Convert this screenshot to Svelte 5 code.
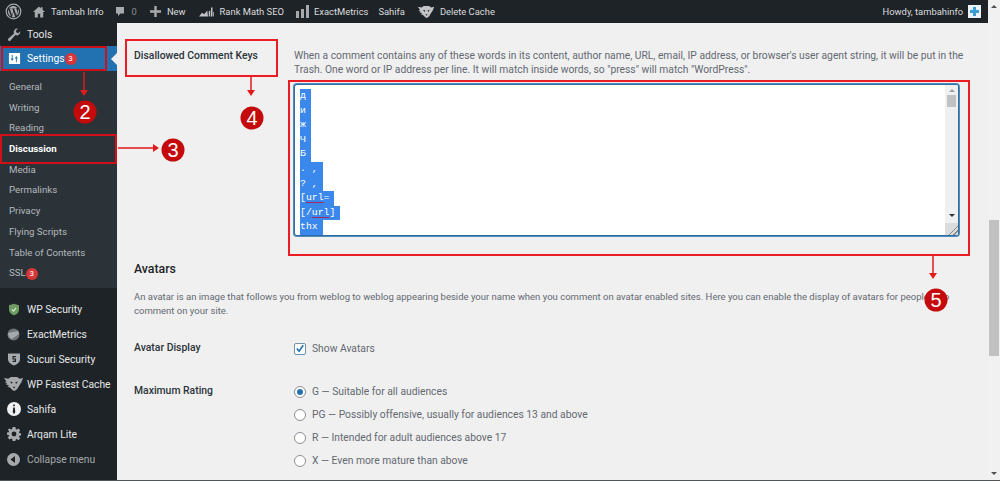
<script>
  const subs = ['General', 'Writing', 'Reading', 'Discussion', 'Media', 'Permalinks', 'Privacy', 'Flying Scripts', 'Table of Contents', 'SSL'];
  const plugins = [
    { name: 'WP Security', icon: 'shield' },
    { name: 'ExactMetrics', icon: 'metrics' },
    { name: 'Sucuri Security', icon: 'sucuri' },
    { name: 'WP Fastest Cache', icon: 'cheetah' },
    { name: 'Sahifa', icon: 'info' },
    { name: 'Arqam Lite', icon: 'gear' }
  ];
  const ratings = [
    'G — Suitable for all audiences',
    'PG — Possibly offensive, usually for audiences 13 and above',
    'R — Intended for adult audiences above 17',
    'X — Even more mature than above'
  ];
  const keys = ['д', 'и', 'ж', 'Ч', 'Б', '. ,', '? ,', '[url=', '[/url]', 'thx'];
</script>

{#snippet cheetah(w, h, fill)}
  <svg class="ico" width={w} height={h} viewBox="0 0 24 18" aria-hidden="true">
    <path fill={fill} d="M1 2l5 1 3-2h7l3 2 4-1-2 5-2 3-3 5-3 2-2-1-3-3-3-1 2-1-4-2 2-1-3-1 2-1z" />
    <path fill="#1d2327" d="M8 6l3 1-1 2zM17 6l-3 1 1 2zM11 12h3l-1 2z" />
  </svg>
{/snippet}

<div class="page">
  <div class="wrap">
    <header class="topbar">
      <div class="bar-left">
        <svg class="ico wp" width="17" height="17" viewBox="0 0 20 20" aria-hidden="true">
          <circle cx="10" cy="10" r="8.6" fill="none" stroke="#a7aaad" stroke-width="1.4" />
          <path fill="#a7aaad" d="M3.4 10c0 2.6 1.5 4.9 3.7 6L4 7.5A6.600 6.600 0 0 0 3.400 10zm11-.4c0-.8-.3-1.400-.5-1.800-.3-.5-.6-.9-.6-1.400 0-.5.4-1.100 1-1.100h.1A6.600 6.600 0 0 0 4.400 6.500h.4c.7 0 1.800-.1 1.800-.1.400 0 .4.500 0 .6 0 0-.4 0-.8.100l2.400 7.200 1.500-4.400-1-2.800-.7-.1c-.4 0-.3-.6 0-.6 0 0 1.100.1 1.800.1s1.800-.1 1.800-.1c.4 0 .4.500 0 .6 0 0-.4 0-.8.100l2.400 7.100.7-2.200c.3-.9.500-1.600.5-2.200zM10.100 10.700l-2 5.800a6.600 6.600 0 0 0 4-.1l-.1-.1zM15.800 7c0 .7-.1 1.400-.5 2.300l-2 5.800A6.600 6.600 0 0 0 15.800 7z" />
        </svg>
        <span class="bar-item home">
          <svg class="ico" width="12" height="12" viewBox="0 0 20 18" aria-hidden="true"><path fill="#a7aaad" d="M10 0L0 9h3v9h5v-6h4v6h5V9h3l-4-3.600V1h-3v2z" /></svg>
          Tambah Info
        </span>
        <span class="bar-item comments">
          <svg class="ico" width="10" height="11" viewBox="0 0 20 20" aria-hidden="true"><path fill="#a7aaad" d="M2 1h16v13h-7l-5 5v-5H2z" /></svg>
          <span class="muted">0</span>
        </span>
        <span class="bar-item new">
          <svg class="ico" width="11" height="11" viewBox="0 0 11 11" aria-hidden="true"><path fill="#a7aaad" d="M4.300 0h2.400v4.300H11v2.400H6.700V11H4.300V6.700H0V4.300h4.300z" /></svg>
          New
        </span>
        <span class="bar-item rank">
          <svg class="ico" width="15" height="10" viewBox="0 0 20 12" aria-hidden="true"><path fill="#c3c4c7" d="M0 12l4-5 3 2 4-5 1 8zM13 12V5l2-1v8zM16 12V0l2 0v12zM19 12V6h1v6z" /></svg>
          Rank Math SEO
        </span>
        <span class="bar-item metrics">
          <svg class="ico" width="13" height="13" viewBox="0 0 13 13" aria-hidden="true"><path fill="#a7aaad" d="M0 6h3v7H0zM5 4h3v9H5zM10 0h3v13h-3z" /></svg>
          ExactMetrics
        </span>
        <span class="bar-item sahifa">Sahifa</span>
        <span class="bar-item cache">
          {@render cheetah(18, 14, '#c3c4c7')}
          Delete Cache
        </span>
      </div>
      <div class="bar-right">
        <span>Howdy, tambahinfo</span>
        <span class="avatar"><span class="cross"></span></span>
      </div>
    </header>

    <div class="body">
      <nav class="side">
        <div class="menu tools">
          <svg class="ico" width="14" height="14" viewBox="0 0 20 20" aria-hidden="true"><path fill="#a7aaad" d="M19 5.500a5 5 0 0 1-7 4.600L5 18a2 2 0 0 1-3-3l8-7A5 5 0 0 1 15.500 1L12.500 4l1 2.500 2.500 1 3-3z" /></svg>
          Tools
        </div>
        <div class="menu current">
          <svg class="ico" width="13" height="13" viewBox="0 0 14 14" aria-hidden="true"><path fill="#fff" fill-rule="evenodd" d="M1 1h12v12H1zM4 3v4H2.800l1.700 2.600L6.200 7H5V3zM9.500 11V7h1.200L9 4.400 7.300 7h1.200v4z" /></svg>
          Settings <span class="count">3</span>
        </div>
        <ul class="sub">
          {#each subs as s}
            <li class:on={s === 'Discussion'}>{s}{#if s === 'SSL'} <span class="count">3</span>{/if}</li>
          {/each}
        </ul>
        <div class="plugins">
          {#each plugins as p}
            <div class="menu">
              <span class="slot">
                {#if p.icon === 'shield'}
                  <svg class="ico" width="10" height="13" viewBox="0 0 12 14" aria-hidden="true"><path fill="#6d9b62" d="M6 0l6 2v5c0 3.500-3 6-6 7-3-1-6-3.500-6-7V2z" /><path fill="none" stroke="#d8e8d4" stroke-width="1.300" d="M3.500 7l2 2 3-4" /></svg>
                {:else if p.icon === 'metrics'}
                  <svg class="ico" width="13" height="13" viewBox="0 0 13 13" aria-hidden="true"><circle cx="6.500" cy="6.500" r="6" fill="#6f7478" /><path fill="#a7aaad" d="M1 5l10-2 1 3-7 5-3-2z" /></svg>
                {:else if p.icon === 'sucuri'}
                  <svg class="ico" width="12" height="14" viewBox="0 0 13 14" aria-hidden="true"><path fill="#a7aaad" d="M0 1h13v6c0 3.500-3 6-6.500 7C3 13 0 10.500 0 7z" /><path fill="none" stroke="#1d2327" stroke-width="1.300" d="M8.500 4.500h-3v2.500h2.500v2.500h-3" /></svg>
                {:else if p.icon === 'cheetah'}
                  {@render cheetah(21, 16, '#a7aaad')}
                {:else if p.icon === 'info'}
                  <svg class="ico" width="14" height="14" viewBox="0 0 14 14" aria-hidden="true"><circle cx="7" cy="7" r="7" fill="#f0f0f1" /><path fill="#1d2327" d="M6.200 2.500h1.600v1.800H6.200zM6.200 5.500h1.600L8.300 10 7 12.300 5.700 10z" /></svg>
                {:else}
                  <svg class="ico" width="14" height="14" viewBox="0 0 20 20" aria-hidden="true"><path fill="#a7aaad" fill-rule="evenodd" d="M8 0h4l.5 3 1.500.7L16.500 2 19 5l-2 2 .5 1.500 2.500.5v3l-2.500.5-.5 1.500 2 2-2.500 3-2.500-1.700-1.500.7L12 20H8l-.5-3-1.500-.7L3.500 18 1 15l2-2-.5-1.500L0 11V8l2.500-.5L3 6 1 4l2.500-2L6 3.700 7.500 3zM10 6.500a3.500 3.500 0 1 0 0 7 3.500 3.500 0 0 0 0-7z" /></svg>
                {/if}
              </span>
              {p.name}
            </div>
          {/each}
          <div class="menu collapse">
            <span class="slot">
              <svg class="ico" width="13" height="13" viewBox="0 0 13 13" aria-hidden="true"><circle cx="6.500" cy="6.500" r="6.500" fill="#a7aaad" /><path fill="#1d2327" d="M8 3v7L3.500 6.500z" /></svg>
            </span>
            Collapse menu
          </div>
        </div>
      </nav>

      <main class="content">
        <section class="row keys-row">
          <h4 class="label">Disallowed Comment Keys</h4>
          <div class="field">
            <p class="desc">When a comment contains any of these words in its content, author name, URL, email, IP address, or browser's user agent string, it will be put in the Trash. One word or IP address per line. It will match inside words, so "press" will match "WordPress".</p>
            <div class="ta">
              <div class="ta-text">
                {#each keys as k}
                  <div class="line"><span class="sel">{#each k.split(/(url)/) as part}{#if part === 'url'}<span class="typo">{part}</span>{:else}{part}{/if}{/each}</span></div>
                {/each}
              </div>
              <div class="ta-scroll">
                <span class="up"></span>
                <span class="thumb"></span>
                <span class="grow"></span>
                <span class="down"></span>
                <span class="grip"></span>
              </div>
            </div>
          </div>
        </section>

        <h3 class="heading">Avatars</h3>
        <p class="intro">An avatar is an image that follows you from weblog to weblog appearing beside your name when you comment on avatar enabled sites. Here you can enable the display of avatars for people who comment on your site.</p>

        <section class="row display-row">
          <h4 class="label">Avatar Display</h4>
          <label class="choice">
            <span class="check">
              <svg width="11" height="11" viewBox="0 0 11 11" aria-hidden="true"><path fill="none" stroke="#2271b1" stroke-width="1.800" d="M2 5.500l2.500 3L9 2" /></svg>
            </span>
            Show Avatars
          </label>
        </section>

        <section class="row">
          <h4 class="label">Maximum Rating</h4>
          <div class="radios">
            {#each ratings as r, i}
              <div class="choice">
                <span class="radio" class:picked={i === 0}></span>
                {r}
              </div>
            {/each}
          </div>
        </section>
      </main>
    </div>
    <div class="bottom-edge"></div>
  </div>

  <aside class="scrollbar">
    <span class="sb-up"></span>
    <span class="sb-thumb"></span>
    <span class="sb-down"></span>
  </aside>

  <!-- red tutorial marks laid over the screenshot -->
  <div class="box dark" style="left:1px;top:46px;width:106px;height:25px"></div>
  <div class="box dark" style="left:0;top:134px;width:117px;height:30px"></div>
  <div class="box" style="left:125px;top:39px;width:153px;height:38px"></div>
  <div class="box" style="left:288px;top:80px;width:682px;height:176px"></div>

  <svg class="marks" width="1000" height="481" viewBox="0 0 1000 481" aria-hidden="true">
    <g fill="none" stroke="#e01b1b" stroke-width="1.500">
      <path d="M84 72v19" />
      <path d="M118 148h36" />
      <path d="M251 77v15" />
      <path d="M933 256v18" />
    </g>
    <g fill="#e01b1b">
      <path d="M80 90h8l-4 6z" />
      <path d="M153 144v8l6-4z" />
      <path d="M247 90h8l-4 6z" />
      <path d="M929 273h8l-4 6z" />
    </g>
    <g fill="#c40a0a">
      <circle cx="85" cy="112" r="11.500" />
      <circle cx="173" cy="150" r="11.500" />
      <circle cx="252" cy="118" r="11.500" />
      <circle cx="936" cy="300" r="11.500" />
    </g>
  </svg>
  <span class="num" style="left:74px;top:100px">2</span>
  <span class="num" style="left:162px;top:138px">3</span>
  <span class="num" style="left:241px;top:106px">4</span>
  <span class="num" style="left:925px;top:288px">5</span>
</div>

<style>
  :global(body) {
    margin: 0;
    background: #f0f0f1;
  }

  .page {
    position: relative;
    display: flex;
    width: 1000px;
    height: 481px;
    overflow: hidden;
    font-family: Roboto, "Noto Sans", sans-serif;
    font-size: 10.300px;
    color: #50575e;
    background: #f0f0f1;
  }

  .wrap {
    flex: 1;
    display: flex;
    flex-direction: column;
    min-width: 0;
  }

  .ico {
    display: block;
    flex: none;
  }

  /* admin bar */
  .topbar {
    height: 23px;
    flex: none;
    background: #1d2327;
    color: #dcdcde;
    font-size: 9.400px;
    display: flex;
    justify-content: space-between;
    align-items: center;
    padding: 0 7px 0 5px;
  }

  .bar-left,
  .bar-right,
  .bar-item {
    display: flex;
    align-items: center;
  }

  .bar-item {
    gap: 6px;
  }

  .home { margin-left: 11px; }
  .comments { margin-left: 11px; gap: 7px; }
  .new { margin-left: 13px; }
  .rank { margin-left: 13px; }
  .metrics { margin-left: 12px; gap: 5px; }
  .sahifa { margin-left: 10px; }
  .cache { margin-left: 12px; gap: 5px; }

  .muted {
    color: #8c8f94;
  }

  .bar-right {
    gap: 5px;
  }

  .avatar {
    width: 13px;
    height: 13px;
    background: #e8f2f8;
    position: relative;
  }

  .cross {
    position: absolute;
    left: 2px;
    top: 2px;
    width: 9px;
    height: 9px;
    background:
      linear-gradient(#3a9bd5, #3a9bd5) center / 3px 9px no-repeat,
      linear-gradient(#3a9bd5, #3a9bd5) center / 9px 3px no-repeat;
  }

  /* left menu */
  .body {
    flex: 1;
    display: flex;
    min-height: 0;
  }

  .side {
    width: 117px;
    flex: none;
    background: #1d2327;
    color: #e6e7e8;
    display: flex;
    flex-direction: column;
  }

  .menu {
    height: 25px;
    display: flex;
    align-items: center;
    gap: 6px;
    padding-left: 7px;
    font-size: 10.300px;
    white-space: nowrap;
  }

  .tools {
    height: 23px;
    gap: 6px;
  }

  .current {
    background: #2271b1;
    color: #fff;
    padding-left: 8px;
    position: relative;
  }

  .current::after {
    content: "";
    position: absolute;
    right: 0;
    top: 7px;
    border: 6px solid transparent;
    border-right-color: #f0f0f1;
    border-left-width: 0;
  }

  .count {
    display: inline-block;
    min-width: 12px;
    height: 12px;
    line-height: 12px;
    border-radius: 6px;
    background: #d63638;
    color: #fff;
    font-size: 8px;
    text-align: center;
    margin-left: -6px;
  }

  .sub {
    list-style: none;
    margin: 0;
    padding: 6px 0 4px;
    background: #2c3338;
    color: #b4b9be;
  }

  .sub li {
    height: 20.700px;
    line-height: 20.700px;
    padding-left: 9px;
    font-size: 9.700px;
  }

  .sub li .count {
    margin-left: 0;
  }

  .sub li.on {
    color: #fff;
    font-weight: 700;
  }

  .plugins {
    padding-top: 9px;
  }

  .slot {
    width: 15px;
    display: flex;
    justify-content: center;
    flex: none;
    margin-left: -1px;
  }

  .collapse {
    color: #a7aaad;
  }

  /* settings content */
  .content {
    flex: 1;
    min-width: 0;
    padding: 0 17px 0 17px;
  }

  .row {
    display: flex;
  }

  .label {
    width: 160px;
    flex: none;
    margin: 0;
    font-size: 10.400px;
    font-weight: 500;
    color: #2c3338;
  }

  .keys-row {
    padding-top: 26px;
  }

  .field {
    flex: 1;
    min-width: 0;
    margin-right: -2px;
  }

  .desc {
    margin: 0 0 7px;
    line-height: 14px;
    color: #646970;
  }

  .ta {
    width: 665px;
    height: 152px;
    box-sizing: border-box;
    border: 1px solid #2f6ea5;
    border-radius: 3px;
    background: #fff;
    display: flex;
    overflow: hidden;
    box-shadow: 0 0 0 1px #4f8ab8;
  }

  .ta-text {
    flex: 1;
    padding: 4px 5px 0;
    font-family: "Liberation Mono", monospace;
    font-size: 9.800px;
    line-height: 14.600px;
    color: #fff;
  }

  .line {
    height: 14.600px;
  }

  .sel {
    display: inline-block;
    background: #3b88ec;
    min-width: 11px;
    padding-right: 5px;
    box-sizing: border-box;
    white-space: pre;
    height: 14.600px;
  }

  .typo {
    text-decoration: underline solid #a02a62 1px;
    text-underline-offset: 2px;
  }

  .ta-scroll {
    width: 13px;
    background: #f0f0f0;
    display: flex;
    flex-direction: column;
    align-items: center;
    flex: none;
  }

  .up {
    margin-top: 4px;
    border: 3px solid transparent;
    border-bottom: 3px solid #a0a0a0;
    border-top-width: 0;
  }

  .thumb {
    margin-top: 3px;
    width: 9px;
    height: 12px;
    background: #c1c1c1;
  }

  .grow {
    flex: 1;
  }

  .down {
    border: 3px solid transparent;
    border-top: 3px solid #333;
    border-bottom-width: 0;
    margin-bottom: 6px;
  }

  .grip {
    width: 100%;
    height: 12px;
    background: linear-gradient(135deg, #dcdcdc 0 60%, #888 60% 66%, #dcdcdc 66% 78%, #888 78% 84%, #dcdcdc 84%);
  }

  .heading {
    margin: 25px 0 0;
    font-size: 12.300px;
    font-weight: 500;
    color: #1d2327;
    line-height: 17px;
  }

  .intro {
    margin: 12px 0 0;
    line-height: 14px;
    font-size: 9.500px;
    color: #646970;
    width: 830px;
  }

  .display-row {
    margin-top: 23px;
    height: 43px;
  }

  .choice {
    display: flex;
    align-items: center;
    gap: 6px;
    height: 23px;
    margin-top: -4px;
    color: #646970;
  }

  .radios .choice {
    margin-top: 0;
  }

  .radios {
    margin-top: -4px;
  }

  .check,
  .radio {
    width: 10px;
    height: 10px;
    border: 1px solid #8c8f94;
    background: #fff;
    display: flex;
    align-items: center;
    justify-content: center;
    flex: none;
  }

  .check {
    border-radius: 2px;
    border-color: #6f93ad;
  }

  .radio {
    border-radius: 50%;
  }

  .radio.picked::after {
    content: "";
    width: 6px;
    height: 6px;
    border-radius: 50%;
    background: #2271b1;
  }

  .bottom-edge {
    height: 1px;
    background: #50555a;
    flex: none;
  }

  /* page scrollbar */
  .scrollbar {
    width: 12px;
    flex: none;
    background: #f1f1f1;
    position: relative;
    display: flex;
    flex-direction: column;
    align-items: center;
    justify-content: space-between;
    box-shadow: inset 0 -1px 0 #50555a;
  }

  .sb-up {
    margin-top: 5px;
    border: 3px solid transparent;
    border-bottom: 3px solid #505050;
    border-top-width: 0;
  }

  .sb-down {
    margin-bottom: 6px;
    border: 3px solid transparent;
    border-top: 3px solid #505050;
    border-bottom-width: 0;
  }

  .sb-thumb {
    position: absolute;
    top: 220px;
    left: 1px;
    width: 10px;
    height: 136px;
    background: #c1c1c1;
  }

  /* annotations */
  .box {
    position: absolute;
    box-sizing: border-box;
    border: 2px solid #ea1c24;
    pointer-events: none;
  }

  .box.dark {
    border-color: #d01018;
  }

  .marks {
    position: absolute;
    left: 0;
    top: 0;
    pointer-events: none;
  }

  .num {
    position: absolute;
    width: 22px;
    text-align: center;
    font-family: "Liberation Sans", Arial, sans-serif;
    font-size: 20px;
    line-height: 24px;
    color: #fff;
  }
</style>
